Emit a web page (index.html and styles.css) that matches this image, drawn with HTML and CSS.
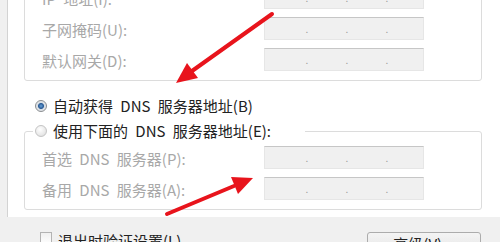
FILE: index.html
```html
<!DOCTYPE html>
<html lang="zh-CN">
<head>
<meta charset="UTF-8">
<meta name="viewport" content="width=device-width, initial-scale=1.0">
<title>Internet 协议版本 4 (TCP/IPv4) 属性</title>
<link rel="stylesheet" href="styles.css">
</head>
<body>

<div class="window">
    <div class="group">
        <div class="row">
            <span class="label">IP 地址(I):</span>
            <span class="ip"><i>.</i><i>.</i><i>.</i></span>
        </div>
        <div class="row">
            <span class="label">子网掩码(U):</span>
            <span class="ip"><i>.</i><i>.</i><i>.</i></span>
        </div>
        <div class="row">
            <span class="label">默认网关(D):</span>
            <span class="ip"><i>.</i><i>.</i><i>.</i></span>
        </div>
    </div>

    <div class="option">
        <span class="radio checked"></span>
        <span>自动获得 DNS 服务器地址(B)</span>
    </div>

    <fieldset class="group dns">
        <legend class="option">
            <span class="radio"></span>
            <span>使用下面的 DNS 服务器地址(E):</span>
        </legend>
        <div class="row">
            <span class="label">首选 DNS 服务器(P):</span>
            <span class="ip"><i>.</i><i>.</i><i>.</i></span>
        </div>
        <div class="row">
            <span class="label">备用 DNS 服务器(A):</span>
            <span class="ip"><i>.</i><i>.</i><i>.</i></span>
        </div>
    </fieldset>

    <div class="footer">
        <label class="check">
            <span class="box"></span>
            <span>退出时验证设置(L)</span>
        </label>
        <button class="btn">高级(V)...</button>
    </div>
</div>

<!-- red annotation arrows drawn over the dialog -->
<svg class="arrows" width="500" height="242" viewBox="0 0 500 242">
    <line x1="272" y1="14" x2="192" y2="71" />
    <polygon points="176,83 198,78 187,63" />
    <line x1="167" y1="214" x2="234" y2="186" />
    <polygon points="253,178 238,194 231,177" />
</svg>

</body>
</html>
```

FILE: styles.css
```css
body {
    margin: 0;
    height: 242px;
    overflow: hidden;
    background: #f0f0f0;
    font-family: "Noto Sans CJK SC", "Liberation Sans", sans-serif;
    font-size: 15px;
    line-height: 20px;
    word-spacing: 4px;
    color: #222;
    position: relative;
}
.window {
    margin-left: 7px;
    width: 484px;
    height: 242px;
    border-left: 1px solid #d3d3d3;
    border-right: 1px solid #d3d3d3;
    background: #fff;
    padding: 0 10px 0 16px;
    box-sizing: content-box;
}
.window > * {
    width: 458px;
    box-sizing: border-box;
}
.group {
    margin: -25px 0 0;
    border: 1px solid #dcdcdc;
    border-radius: 3px;
    padding: 10px 0 9px 17px;
    display: flex;
    flex-direction: column;
    gap: 8px;
}
.row {
    display: flex;
    align-items: center;
    height: 23px;
}
.label {
    width: 222px;
    color: #a8a8a8;
    white-space: nowrap;
    padding-top: 2px;
}
.ip {
    width: 160px;
    height: 23px;
    box-sizing: border-box;
    background: #f0f0f0;
    border: 1px solid #e6e6e6;
    border-top-color: #c6c6c6;
    display: flex;
    gap: 36px;
    padding-left: 40px;
}
.ip i {
    width: 4px;
    font-style: normal;
    font-size: 10px;
    line-height: 22px;
    color: #9c9c9c;
    text-align: center;
}
.option {
    display: flex;
    align-items: center;
    gap: 6px;
    height: 20px;
    margin-top: 15px;
    padding-left: 11px;
    white-space: nowrap;
}
.radio {
    width: 12px;
    height: 12px;
    border-radius: 50%;
    box-sizing: border-box;
    border: 1px solid #c4c4c4;
    background: radial-gradient(circle at 40% 35%, #ffffff 0, #e9e9e9 60%, #d6d6d6 100%);
    flex-shrink: 0;
}
.radio.checked {
    border-color: #8a8d90;
    background: radial-gradient(circle, #6aa3d8 0, #2a5b96 2.5px, #d7dde3 3.5px, #f4f4f4 100%);
}
.dns {
    margin-top: 5px;
    padding: 5px 0 9px 17px;
    min-width: 0;
}
.dns legend.option {
    margin: 0 0 0 -9px;
    padding: 0 2px;
    width: 272px;
    box-sizing: border-box;
    height: 20px;
}
.footer {
    display: flex;
    justify-content: space-between;
    align-items: flex-start;
    margin-top: 22px;
    padding: 0 1px 0 16px;
}
.check {
    display: flex;
    align-items: flex-start;
    gap: 6px;
    margin-top: -1px;
}
.box {
    width: 12px;
    height: 12px;
    margin-top: 1px;
    box-sizing: border-box;
    border: 1px solid #b3b3b3;
    background: linear-gradient(#f0f0f0, #fdfdfd);
}
.btn {
    width: 114px;
    height: 23px;
    border: 1px solid #acacac;
    border-radius: 3px;
    background: linear-gradient(#f4f4f4, #ececec 50%, #dedede 50%, #d3d3d3);
    font: inherit;
    color: #222;
    padding: 0;
    line-height: 21px;
}
.arrows {
    position: absolute;
    top: 0;
    left: 0;
    pointer-events: none;
}
.arrows line {
    stroke: #e8141c;
    stroke-width: 4;
    stroke-linecap: round;
}
.arrows polygon {
    fill: #e8141c;
}
```
